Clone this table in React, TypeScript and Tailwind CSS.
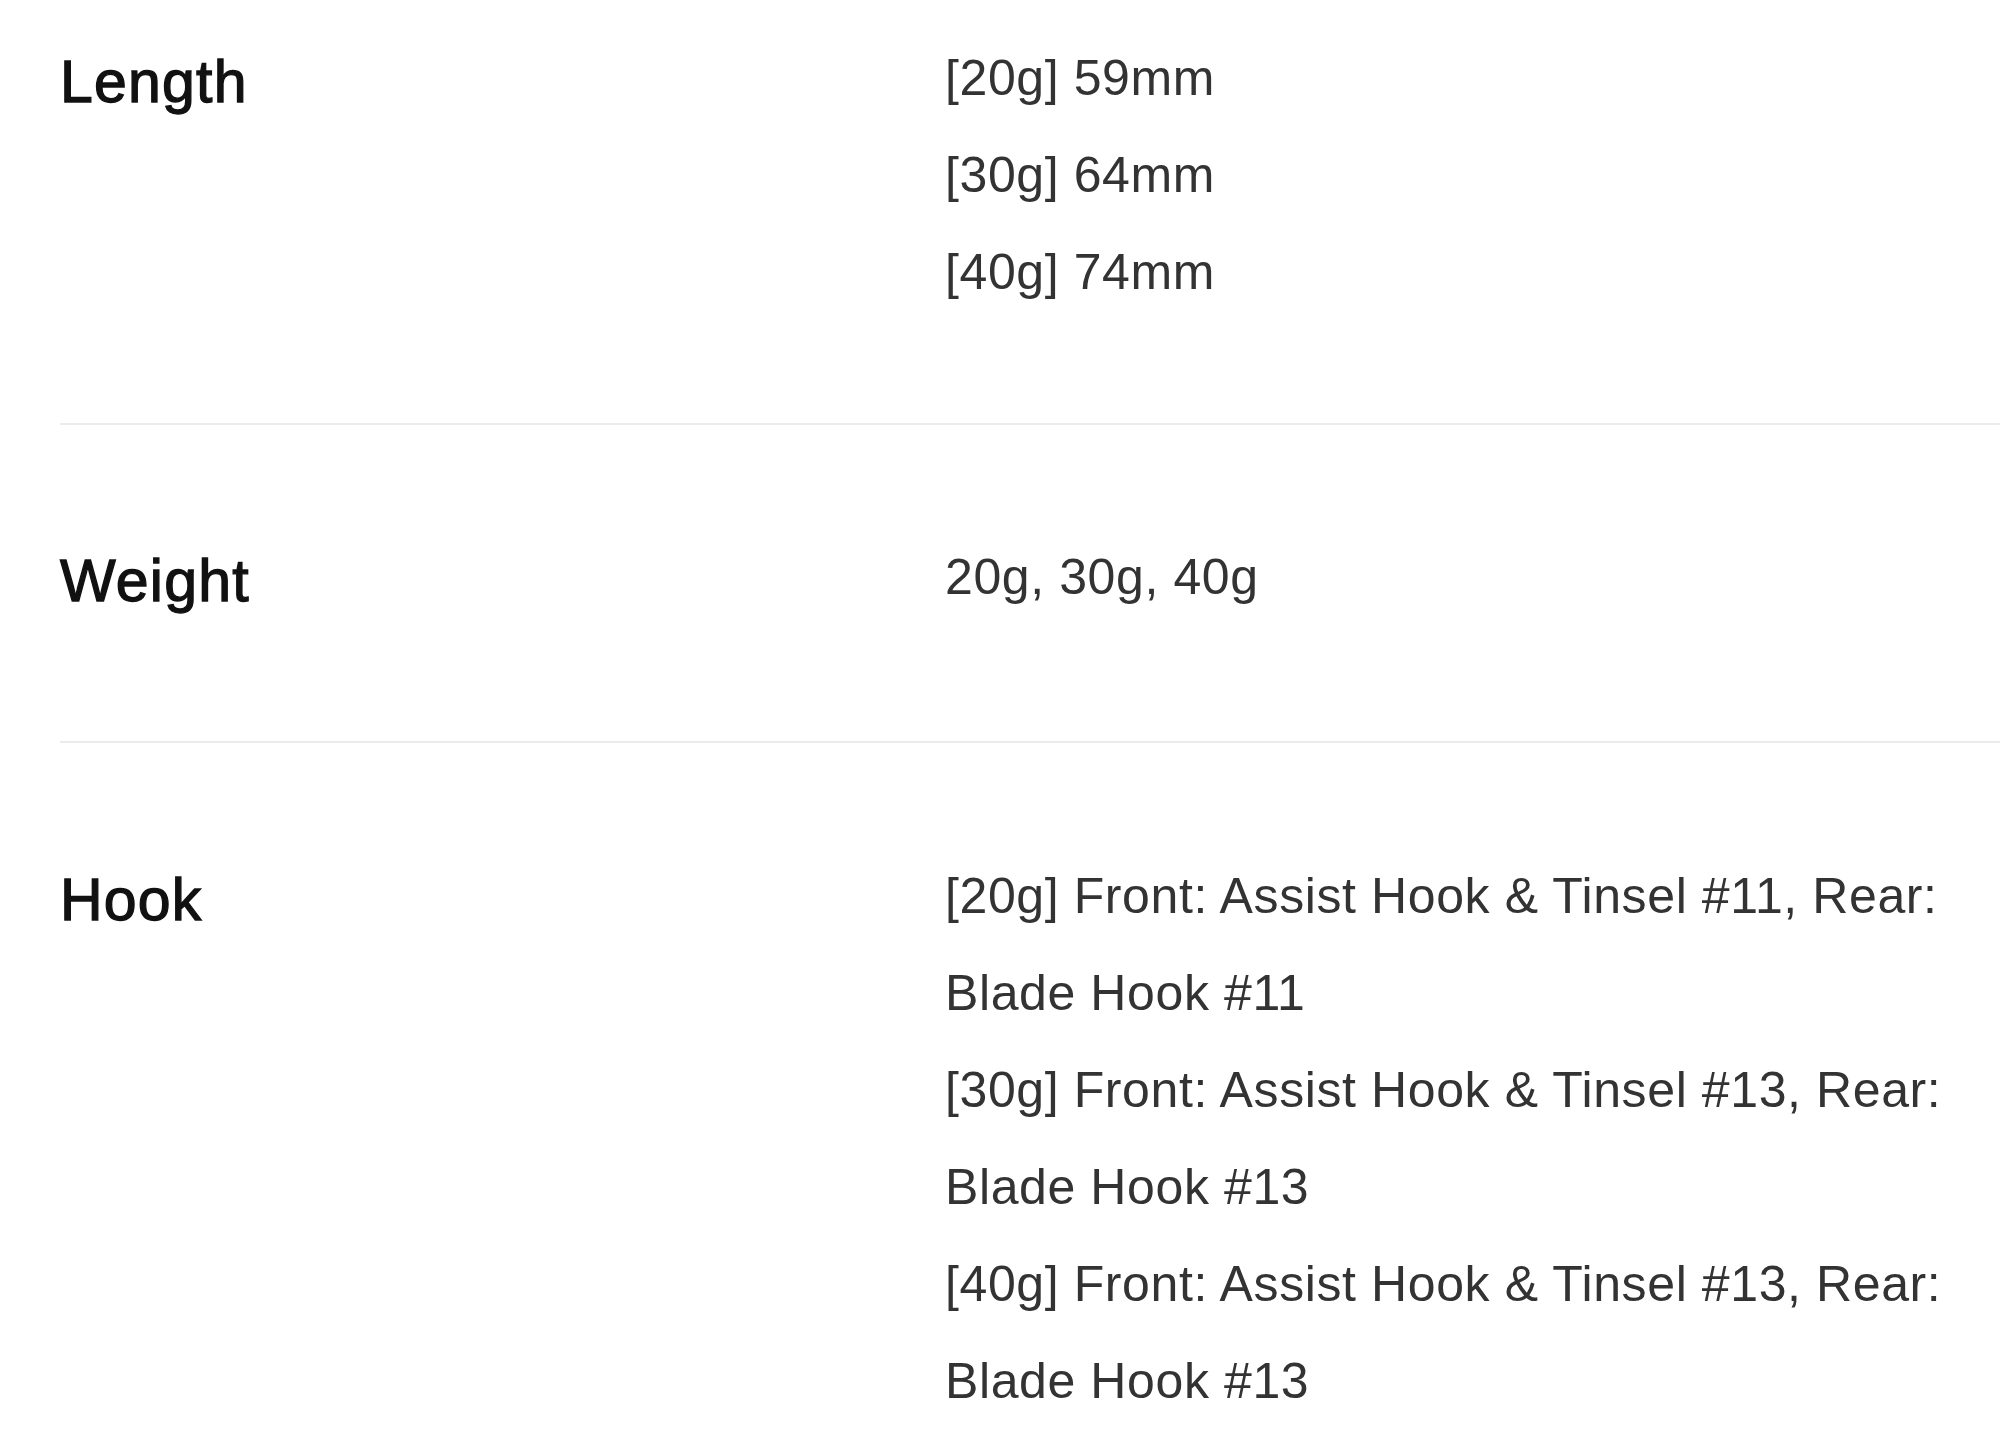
const specs = [
  {
    label: "Length",
    values: ["[20g] 59mm", "[30g] 64mm", "[40g] 74mm"],
    rowClass: "pt-[30px] pb-[102px] border-b-2 border-[#ebebeb]",
  },
  {
    label: "Weight",
    values: ["20g, 30g, 40g"],
    rowClass: "pt-[104px] pb-[111px] border-b-2 border-[#ebebeb]",
  },
  {
    label: "Hook",
    values: [
      "[20g] Front: Assist Hook & Tinsel #11, Rear: Blade Hook #11",
      "[30g] Front: Assist Hook & Tinsel #13, Rear: Blade Hook #13",
      "[40g] Front: Assist Hook & Tinsel #13, Rear: Blade Hook #13",
    ],
    rowClass: "pt-[105px]",
  },
];

const App = () => {
  return (
    <div className="min-h-screen bg-white pl-[60px] font-['Liberation_Sans',Arial,sans-serif] overflow-hidden">
      {specs.map((spec) => (
        <div
          key={spec.label}
          className={`grid grid-cols-[885px_1fr] items-start ${spec.rowClass}`}
        >
          <div className="mt-[4px] text-[59px] leading-[97px] tracking-[1.2px] text-[#111] [-webkit-text-stroke:1.3px_#111]">
            {spec.label}
          </div>
          <div className="flex flex-col text-[50px] leading-[97px] tracking-[0.6px] text-[#333]">
            {spec.values.map((v) => (
              <span key={v}>{v}</span>
            ))}
          </div>
        </div>
      ))}
    </div>
  );
};

export default App;
